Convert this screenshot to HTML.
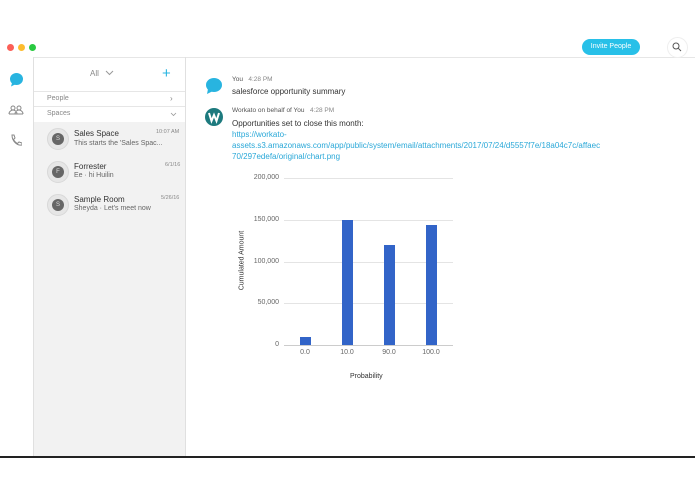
<!DOCTYPE html>
<html><head><style>
body{margin:0;width:695px;height:494px;background:#fff;font-family:"Liberation Sans",sans-serif;position:relative;overflow:hidden}
.a{position:absolute}
.dot{position:absolute;top:44px;width:7px;height:7px;border-radius:50%}
.t{position:absolute;font-size:8px;color:#333;white-space:nowrap}
.g{color:#888}
.av{position:absolute;left:47px;width:20px;height:20px;border-radius:50%;background:#e6e6e6;border:1px solid #d8d8d8}
.av i{position:absolute;left:4px;top:4px;width:12px;height:12px;border-radius:50%;background:#666;color:#ddd;font-size:6px;font-style:normal;text-align:center;line-height:12px}
.gl{position:absolute;left:284px;width:169px;height:1px;background:#e4e4e4}
.yl{position:absolute;right:416px;font-size:7px;color:#666}
.bar{position:absolute;background:#3264c8;width:11px}
.xl{position:absolute;font-size:7px;color:#666;width:30px;text-align:center}
</style></head><body>
<div class="dot" style="left:7px;background:#fc5f57"></div>
<div class="dot" style="left:18px;background:#fdbc2e"></div>
<div class="dot" style="left:29px;background:#29c940"></div>
<div class="a" style="left:33px;top:57px;width:662px;height:1px;background:#e6e6e6"></div>
<div class="a" style="left:33px;top:57px;width:1px;height:400px;background:#e0e0e0"></div>
<div class="a" style="left:185px;top:57px;width:1px;height:400px;background:#e0e0e0"></div>
<div class="a" style="left:34px;top:122px;width:151px;height:335px;background:#f2f2f2"></div>
<div class="a" style="left:0;top:456px;width:695px;height:2px;background:#222"></div>
<svg class="a" style="left:9px;top:72px" width="15" height="15"><ellipse cx="7.5" cy="7" rx="6.5" ry="6" fill="#28b4e0"/><path d="M3 11 L2 14.5 L6 12.5Z" fill="#28b4e0"/></svg>
<svg class="a" style="left:8px;top:104px" width="16" height="12" fill="none" stroke="#888" stroke-width="1"><circle cx="5" cy="4" r="2"/><circle cx="11" cy="4" r="2"/><path d="M1 10c0-3 3-4 4-4s4 1 4 4M7 10c0-3 3-4 4-4s4 1 4 4M1 10h14"/></svg>
<svg class="a" style="left:10px;top:134px" width="12" height="13" fill="none" stroke="#888" stroke-width="1"><path d="M2 1l2 0 1 3-1.5 1.5c1 2 2 3 4 4L9 8l3 1v2c-5 1-10-4-10-10z"/></svg>
<div class="t g" style="left:90px;top:69px;font-size:8px">All</div>
<svg class="a" style="left:105px;top:70px" width="9" height="6" fill="none" stroke="#999"><path d="M1 1l3.5 3.5L8 1"/></svg>
<div class="a" style="left:162px;top:68px;color:#28b4e0;font-size:15px;line-height:12px">+</div>
<div class="a" style="left:34px;top:91px;width:151px;height:1px;background:#e6e6e6"></div>
<div class="t g" style="left:47px;top:95px;font-size:7px">People</div>
<div class="t g" style="left:170px;top:94px">›</div>
<div class="a" style="left:34px;top:106px;width:151px;height:1px;background:#e6e6e6"></div>
<div class="t g" style="left:47px;top:110px;font-size:7px">Spaces</div>
<svg class="a" style="left:170px;top:112px" width="7" height="5" fill="none" stroke="#999" stroke-width=".8"><path d="M1 1l2.5 2.5L6 1"/></svg>
<div class="av" style="top:128px"><i>S</i></div>
<div class="t" style="left:74px;top:129px;font-size:8px">Sales Space</div>
<div class="t g" style="left:74px;top:140px;font-size:7px;color:#666">This starts the 'Sales Spac...</div>
<div class="t g" style="left:156px;top:129px;font-size:5.5px">10:07 AM</div>
<div class="av" style="top:161px"><i>F</i></div>
<div class="t" style="left:74px;top:162px;font-size:8px">Forrester</div>
<div class="t g" style="left:74px;top:172px;font-size:7px;color:#666">Ee · hi Huilin</div>
<div class="t g" style="left:165px;top:162px;font-size:5.5px">6/1/16</div>
<div class="av" style="top:194px"><i>S</i></div>
<div class="t" style="left:74px;top:195px;font-size:8px">Sample Room</div>
<div class="t g" style="left:74px;top:205px;font-size:7px;color:#666">Sheyda · Let's meet now</div>
<div class="t g" style="left:161px;top:195px;font-size:5.5px">5/26/16</div>
<div class="a" style="left:582px;top:39px;width:58px;height:16px;border-radius:8px;background:#28c0e8;color:#fff;font-size:7px;text-align:center;line-height:16px">Invite People</div>
<div class="a" style="left:667px;top:37px;width:19px;height:19px;border-radius:50%;border:1px solid #eee"></div>
<svg class="a" style="left:672px;top:42px" width="10" height="10" fill="none" stroke="#555"><circle cx="4" cy="4" r="3"/><path d="M6.3 6.3L9 9"/></svg>
<svg class="a" style="left:205px;top:77px" width="18" height="18"><ellipse cx="9" cy="8" rx="8" ry="7" fill="#28b4e0"/><path d="M3 12 L2 17 L8 14Z" fill="#28b4e0"/></svg>
<div class="t g" style="left:232px;top:76px;font-size:6.5px;color:#555">You &nbsp; <span style="color:#888">4:28 PM</span></div>
<div class="t" style="left:232px;top:87px">salesforce opportunity summary</div>
<svg class="a" style="left:205px;top:108px" width="18" height="18"><circle cx="9" cy="9" r="9" fill="#1d7a7e"/><path d="M4 5l2.5 8 2.5-6 2.5 6 2.5-8" fill="none" stroke="#fff" stroke-width="2"/></svg>
<div class="t g" style="left:232px;top:107px;font-size:6.5px;color:#555">Workato on behalf of You &nbsp; <span style="color:#888">4:28 PM</span></div>
<div class="t" style="left:232px;top:119px">Opportunities set to close this month:</div>
<div class="t" style="left:232px;top:130px;color:#2aa8d8">https://workato-</div>
<div class="t" style="left:232px;top:141px;color:#2aa8d8">assets.s3.amazonaws.com/app/public/system/email/attachments/2017/07/24/d5557f7e/18a04c7c/affaec</div>
<div class="t" style="left:232px;top:152px;color:#2aa8d8">70/297edefa/original/chart.png</div>
<div class="gl" style="top:178px"></div><div class="gl" style="top:220px"></div><div class="gl" style="top:262px"></div><div class="gl" style="top:303px"></div><div class="gl" style="top:345px;background:#ccc"></div>
<div class="yl" style="top:174px">200,000</div><div class="yl" style="top:216px">150,000</div><div class="yl" style="top:258px">100,000</div><div class="yl" style="top:299px">50,000</div><div class="yl" style="top:341px">0</div>
<div class="bar" style="left:300px;top:337px;height:8px"></div>
<div class="bar" style="left:342px;top:220px;height:125px"></div>
<div class="bar" style="left:384px;top:245px;height:100px"></div>
<div class="bar" style="left:426px;top:225px;height:120px"></div>
<div class="xl" style="left:290px;top:349px">0.0</div><div class="xl" style="left:332px;top:349px">10.0</div><div class="xl" style="left:374px;top:349px">90.0</div><div class="xl" style="left:416px;top:349px">100.0</div>
<div class="t" style="left:350px;top:373px;font-size:7px;color:#333">Probability</div>
<div class="t" style="left:207px;top:257px;font-size:7px;color:#333;transform:rotate(-90deg);transform-origin:center;width:70px;text-align:center">Cumulated Amount</div>
</body></html>
